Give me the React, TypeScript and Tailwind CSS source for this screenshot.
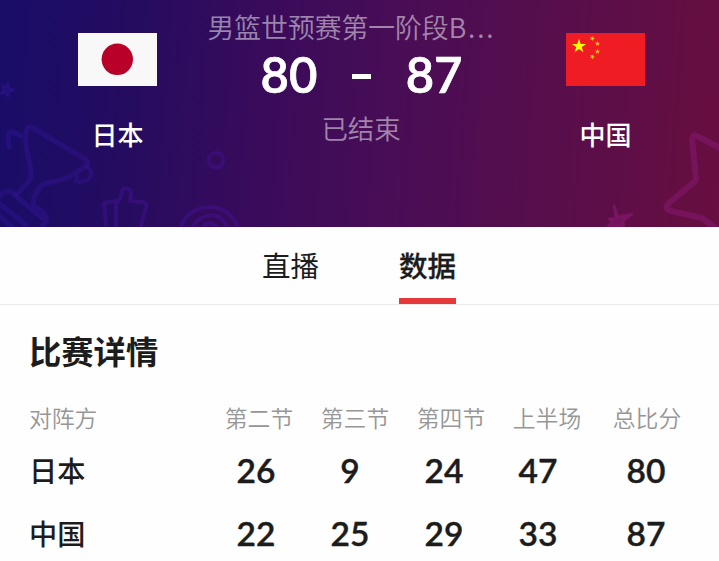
import React from "react";

const cjk = "font-['Noto_Sans_CJK_SC',sans-serif]";
const num = "font-['Lato','Noto_Sans_CJK_SC',sans-serif]";

const headings = ["第二节", "第三节", "第四节", "上半场", "总比分"];
const rows = [
  { team: "日本", scores: [26, 9, 24, 47, 80] },
  { team: "中国", scores: [22, 25, 29, 33, 87] },
];

function star(cx: number, cy: number, r: number, turn = 0) {
  return Array.from({ length: 10 }, (_, i) => {
    const a = ((i * 36 - 90 + turn) * Math.PI) / 180;
    const d = i % 2 ? r * 0.382 : r;
    return `${(cx + d * Math.cos(a)).toFixed(2)},${(cy + d * Math.sin(a)).toFixed(2)}`;
  }).join(" ");
}

function Doodles() {
  return (
    <svg className="absolute inset-0 h-full w-full" viewBox="0 0 719 227" fill="none" strokeLinecap="round" strokeLinejoin="round">
      <g stroke="#36159a" strokeOpacity=".38" strokeWidth="5">
        <path d="M8 83l1 5 5 2-5 2-1 5-3-4-5 1 4-4-2-5 5 2z" strokeWidth="2" fill="#3b1a9c" fillOpacity=".3" />
        <path d="M9 147l-1-14 5-1 8 4" />
        <path d="M17 194c5-7 13-10 14-18 1-13-8-29-5-44 1-5 4-6 7-4l52 31c4 3 3 6 0 8-9 6-16 11-25 13-8 3-15 1-19 6-7 8-9 14-7 20l9 6c4 4 5 8 0 13" />
        <path d="M87 167l4 4c2 6-5 13-15 10l1-4" strokeWidth="4" />
        <path d="M0 196c4-6 11-6 15-1l27 23M0 204l26 21M0 216l12 11" />
      </g>
      <g stroke="#451092" strokeOpacity=".48" strokeWidth="4">
        <path d="M106 225l-2-22 12-2v25M116 203c4-2 5-6 6-12 2-4 9-3 9 2l-1 8 13 1c4 1 4 4 2 8l-4 16" />
        <circle cx="216" cy="160" r="7.5" strokeWidth="3.5" />
        <path d="M181 227c7-26 49-27 56 0M193 227c8-15 27-16 34 0M203 227c4-5 10-5 14 0" />
      </g>
      <g stroke="#82176c" strokeOpacity=".6" strokeWidth="6">
        <path d="M722 149l-25-13q-5-2-5 4l4 38q0 3-3 5l-24 20q-6 5 2 8l31 7 12 9" />
        <path d="M614 206l4 11 14-3-9 7 1 8-7-4-9 2 4-6-3-2 7-1z" strokeWidth="3" fill="#82176c" fillOpacity=".6" />
      </g>
    </svg>
  );
}

function JapanFlag() {
  return (
    <svg className="h-[53px] w-[79px]" viewBox="0 0 79 53">
      <path fill="#f8f8f8" d="M0 0h79v53H0z" />
      <circle cx="39.3" cy="26.3" r="15.7" fill="#b90028" />
    </svg>
  );
}

function ChinaFlag() {
  return (
    <svg className="h-[53px] w-[79px]" viewBox="0 0 79 53">
      <path fill="#f01c24" d="M0 0h79v53H0z" />
      <g fill="#ffff00">
        <polygon points={star(13, 13.2, 7.5)} />
        <g fill="#fbd313">
          <polygon points={star(26.3, 5.5, 2.8, 20)} />
          <polygon points={star(31.5, 10.8, 2.8, 8)} />
          <polygon points={star(31.5, 18.5, 2.8)} />
          <polygon points={star(26.3, 23.8, 2.8, 20)} />
        </g>
      </g>
    </svg>
  );
}

function Team({ name, children }: { name: string; children: React.ReactNode }) {
  return (
    <div className="flex w-[79px] flex-col items-center pt-[33px]">
      {children}
      <div className="mt-[33px] text-[26px] leading-[30px] font-medium whitespace-nowrap text-white">{name}</div>
    </div>
  );
}

export default function App() {
  return (
    <div className={`h-[561px] w-[719px] overflow-hidden bg-[#fefefe] text-[#1c1c1c] ${cjk}`}>
      <header className="relative h-[227px] bg-[linear-gradient(94deg,#190d68_0%,#240c60_18%,#380b5b_35%,#490d56_55%,#580e4b_77%,#680e40_100%)]">
        <Doodles />
        <div className="relative flex justify-between pr-[74px] pl-[78px]">
          <Team name="日本">
            <JapanFlag />
          </Team>
          <div className="flex w-[310px] flex-col items-center">
            <div className="mt-[11px] w-[308px] text-[26.8px] leading-8 font-[350] whitespace-nowrap text-white/50">
              男篮世预赛第一阶段<span className="tracking-[1.9px]">B...</span>
            </div>
            <div className={`mt-[4px] flex h-[54px] w-[202px] items-center justify-between text-[49px] leading-[54px] font-semibold text-white [-webkit-text-stroke:0.7px_white] ${num}`}>
              <span>80</span>
              <span className="mt-1 h-[5px] w-[19px] bg-white" />
              <span>87</span>
            </div>
            <div className="mt-[11px] pr-[1px] text-[26.4px] leading-8 font-[350] text-white/50">已结束</div>
          </div>
          <Team name="中国">
            <ChinaFlag />
          </Team>
        </div>
      </header>

      <nav className="flex h-[78px] justify-center gap-[80px] border-b border-[#e9e9e9] pr-[1px] text-[28.5px]">
        <div className="pt-[19px] leading-[38px]">直播</div>
        <div className="h-[77px] border-b-[6px] border-[#e5393c] pt-[19px] leading-[38px] font-medium [-webkit-text-stroke:0.3px_#1c1c1c]">数据</div>
      </nav>

      <main className="pl-[29px]">
        <h1 className="pt-[25px] text-[32.3px] leading-[40px] font-bold">比赛详情</h1>
        <div className="mt-[32px] flex h-[32px] items-center text-[22.8px] font-[350] text-[#969696]">
          <div className="w-[182px]">对阵方</div>
          {headings.map((h) => (
            <div key={h} className="w-24 text-center last:ml-1">{h}</div>
          ))}
        </div>
        <div className="mt-[5px]">
          {rows.map((row) => (
            <div key={row.team} className="flex h-[63px] items-center">
              <div className="w-[180px] text-[28.2px] font-medium">{row.team}</div>
              {row.scores.map((s, i) => (
                <div key={i} className={`w-[94px] text-center text-[33.5px] font-semibold [-webkit-text-stroke:0.4px_#1c1c1c] last:ml-[14px] ${num}`}>{s}</div>
              ))}
            </div>
          ))}
        </div>
      </main>
    </div>
  );
}
